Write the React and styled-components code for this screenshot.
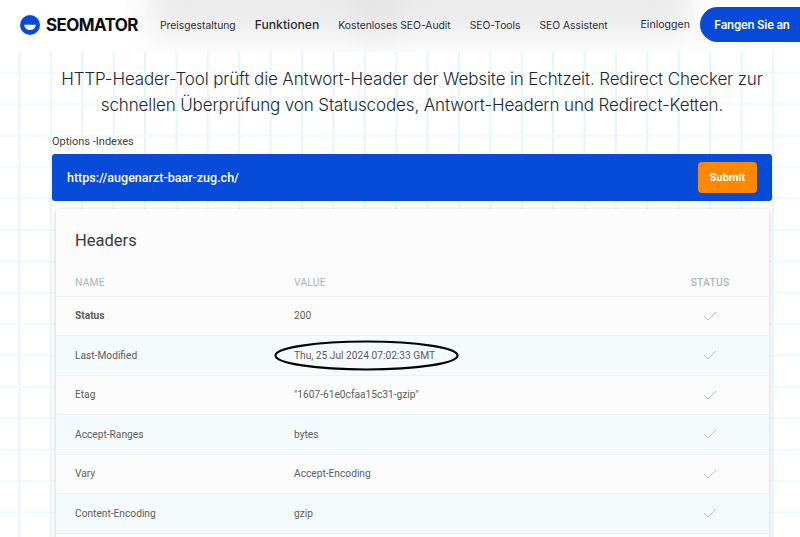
import React from "react";
import styled, { createGlobalStyle } from "styled-components";

const GlobalStyle = createGlobalStyle`
  html, body {
    margin: 0;
    padding: 0;
    background: #fff;
    font-family: "Roboto", "Liberation Sans", sans-serif;
  }
  body {
    overflow: hidden;
  }
`;

const Page = styled.div`
  width: 800px;
  height: 537px;
  overflow: hidden;
  position: relative;
`;

const Header = styled.header`
  height: 52px;
  display: flex;
  align-items: center;
  padding: 0 0 3px 20px;
  box-sizing: border-box;
  position: relative;
  overflow: hidden;
  background: #fff;
`;

const HeaderBlur = styled.div`
  position: absolute;
  left: ${(p) => p.$left}px;
  width: ${(p) => p.$width}px;
  top: -30px;
  height: 66px;
  background: #dcdcdc;
  filter: blur(17px);
  opacity: 0.6;
`;

const Brand = styled.div`
  display: flex;
  align-items: center;
  gap: 6px;
  width: 140px;
  position: relative;
`;

const BrandName = styled.span`
  font-family: "Inter", sans-serif;
  font-size: 17px;
  font-weight: 700;
  letter-spacing: -0.6px;
  color: #0d0d12;
`;

const NavList = styled.nav`
  display: flex;
  align-items: center;
  gap: 19px;
  position: relative;
`;

const NavLink = styled.a`
  font-family: "Inter", sans-serif;
  font-size: ${(p) => p.$size || 10.3}px;
  font-weight: ${(p) => (p.$strong ? 500 : 400)};
  color: #2a2e36;
  white-space: nowrap;
`;

const HeaderRight = styled.div`
  margin-left: auto;
  display: flex;
  align-items: center;
  gap: 10px;
  position: relative;
`;

const CtaButton = styled.button`
  width: 100px;
  height: 35px;
  border: 0;
  padding: 0 0 0 4px;
  border-radius: 18px 0 0 18px;
  background: #0749d8;
  color: #fff;
  font-family: "Inter", sans-serif;
  font-size: 11.5px;
  font-weight: 600;
  letter-spacing: -0.2px;
`;

const Content = styled.main`
  height: 485px;
  padding: 14px 28px 0 52px;
  box-sizing: border-box;
  background-color: #fff;
  background-image:
    linear-gradient(to right, #e6f6fd 2px, transparent 2px),
    linear-gradient(to bottom, #f0f9fe 2px, transparent 2px);
  background-size: 31.4px 31.4px;
  background-position: 18.5px 20px;
`;

const Lead = styled.h1`
  margin: 0 0 17px;
  text-align: center;
  font-family: "Inter", sans-serif;
  font-size: 17px;
  line-height: 26px;
  font-weight: 300;
  letter-spacing: -0.13px;
  color: #1d2733;
  white-space: nowrap;
`;

const OptionsLabel = styled.div`
  font-size: 11px;
  line-height: 14px;
  color: #3d3d3d;
  margin-bottom: 5px;
`;

const UrlBar = styled.form`
  height: 47px;
  display: flex;
  align-items: center;
  justify-content: space-between;
  padding: 0 15px;
  box-sizing: border-box;
  border-radius: 3px;
  background: #074bd9;
`;

const UrlText = styled.span`
  color: #fff;
  font-size: 12.5px;
  font-weight: 500;
`;

const SubmitButton = styled.button`
  width: 59px;
  height: 31px;
  border: 0;
  padding: 0;
  border-radius: 4px;
  background: #ff8800;
  color: #fff;
  font-family: "Roboto", sans-serif;
  font-size: 11px;
  font-weight: 700;
`;

const Card = styled.section`
  margin: 8px 3px 0 4px;
  background: #fcfcfc;
  border-radius: 3px;
  box-shadow: 0 1px 4px rgba(0, 0, 0, 0.22);
`;

const CardTitle = styled.h2`
  margin: 0;
  padding: 20px 19px 0;
  height: 62px;
  box-sizing: border-box;
  font-size: 16.5px;
  line-height: 24px;
  font-weight: 400;
  color: #3a3a3a;
`;

const Row = styled.div`
  display: grid;
  grid-template-columns: 219px 1fr 118px;
  align-items: center;
  height: ${(p) => (p.$head ? "25.5px" : "39.5px")};
  padding: 0 0 0 19px;
  box-sizing: border-box;
  border-bottom: 1px solid #e9f2f6;
  background: ${(p) => (p.$tinted ? "#f5fbfc" : "transparent")};
`;

const HeadCell = styled.div`
  font-size: 10.3px;
  line-height: 12px;
  text-transform: uppercase;
  letter-spacing: 0.2px;
  color: #a8b6bf;
  font-weight: ${(p) => (p.$bold ? 500 : 400)};
  text-align: ${(p) => (p.$center ? "center" : "left")};
`;

const Cell = styled.div`
  font-size: 10.2px;
  color: #5c5c5c;
  font-weight: ${(p) => (p.$bold ? 700 : 400)};
`;

const CheckCell = styled.div`
  display: flex;
  justify-content: center;
`;

const RingMark = styled.svg`
  position: absolute;
  left: 274px;
  top: 340px;
`;

const headers = [
  ["Status", "200"],
  ["Last-Modified", "Thu, 25 Jul 2024 07:02:33 GMT"],
  ["Etag", '"1607-61e0cfaa15c31-gzip"'],
  ["Accept-Ranges", "bytes"],
  ["Vary", "Accept-Encoding"],
  ["Content-Encoding", "gzip"],
  ["", ""],
];

const Logo = () => (
  <svg width="20" height="20" viewBox="0 0 20 20">
    <circle cx="10" cy="10" r="10" fill="#0749d8" />
    <path d="M4.2 9.8h11.6a5.8 5.2 0 0 1-11.6 0z" fill="#fff" />
  </svg>
);

const Check = () => (
  <svg width="14" height="10" viewBox="0 0 14 10" fill="none">
    <path d="M1 5l4 4 8-8" stroke="#9fd69f" strokeWidth="1" />
  </svg>
);

export default function App() {
  return (
    <Page>
      <GlobalStyle />
      <Header>
        <HeaderBlur $left={150} $width={240} />
        <HeaderBlur $left={360} $width={330} />
        <Brand>
          <Logo />
          <BrandName>SEOMATOR</BrandName>
        </Brand>
        <NavList>
          <NavLink>Preisgestaltung</NavLink>
          <NavLink $size={12.2} $strong>Funktionen</NavLink>
          <NavLink>Kostenloses SEO-Audit</NavLink>
          <NavLink>SEO-Tools</NavLink>
          <NavLink>SEO Assistent</NavLink>
        </NavList>
        <HeaderRight>
          <NavLink $size={10.6}>Einloggen</NavLink>
          <CtaButton>Fangen Sie an</CtaButton>
        </HeaderRight>
      </Header>
      <Content>
        <Lead>
          HTTP-Header-Tool prüft die Antwort-Header der Website in Echtzeit. Redirect Checker zur
          <br />
          schnellen Überprüfung von Statuscodes, Antwort-Headern und Redirect-Ketten.
        </Lead>
        <OptionsLabel>Options -Indexes</OptionsLabel>
        <UrlBar>
          <UrlText>https://augenarzt-baar-zug.ch/</UrlText>
          <SubmitButton type="button">Submit</SubmitButton>
        </UrlBar>
        <Card>
          <CardTitle>Headers</CardTitle>
          <Row $head>
            <HeadCell>Name</HeadCell>
            <HeadCell>Value</HeadCell>
            <HeadCell $center $bold>Status</HeadCell>
          </Row>
          {headers.map(([name, value], i) => (
            <Row key={i} $tinted={i % 2 === 1}>
              <Cell $bold={i === 0}>{name}</Cell>
              <Cell>{value}</Cell>
              <CheckCell>{name && <Check />}</CheckCell>
            </Row>
          ))}
        </Card>
      </Content>
      <RingMark width="186" height="32" viewBox="0 0 186 32" fill="none">
        <ellipse cx="92.5" cy="15.5" rx="91" ry="14" stroke="#000" strokeWidth="2.2" />
      </RingMark>
    </Page>
  );
}
